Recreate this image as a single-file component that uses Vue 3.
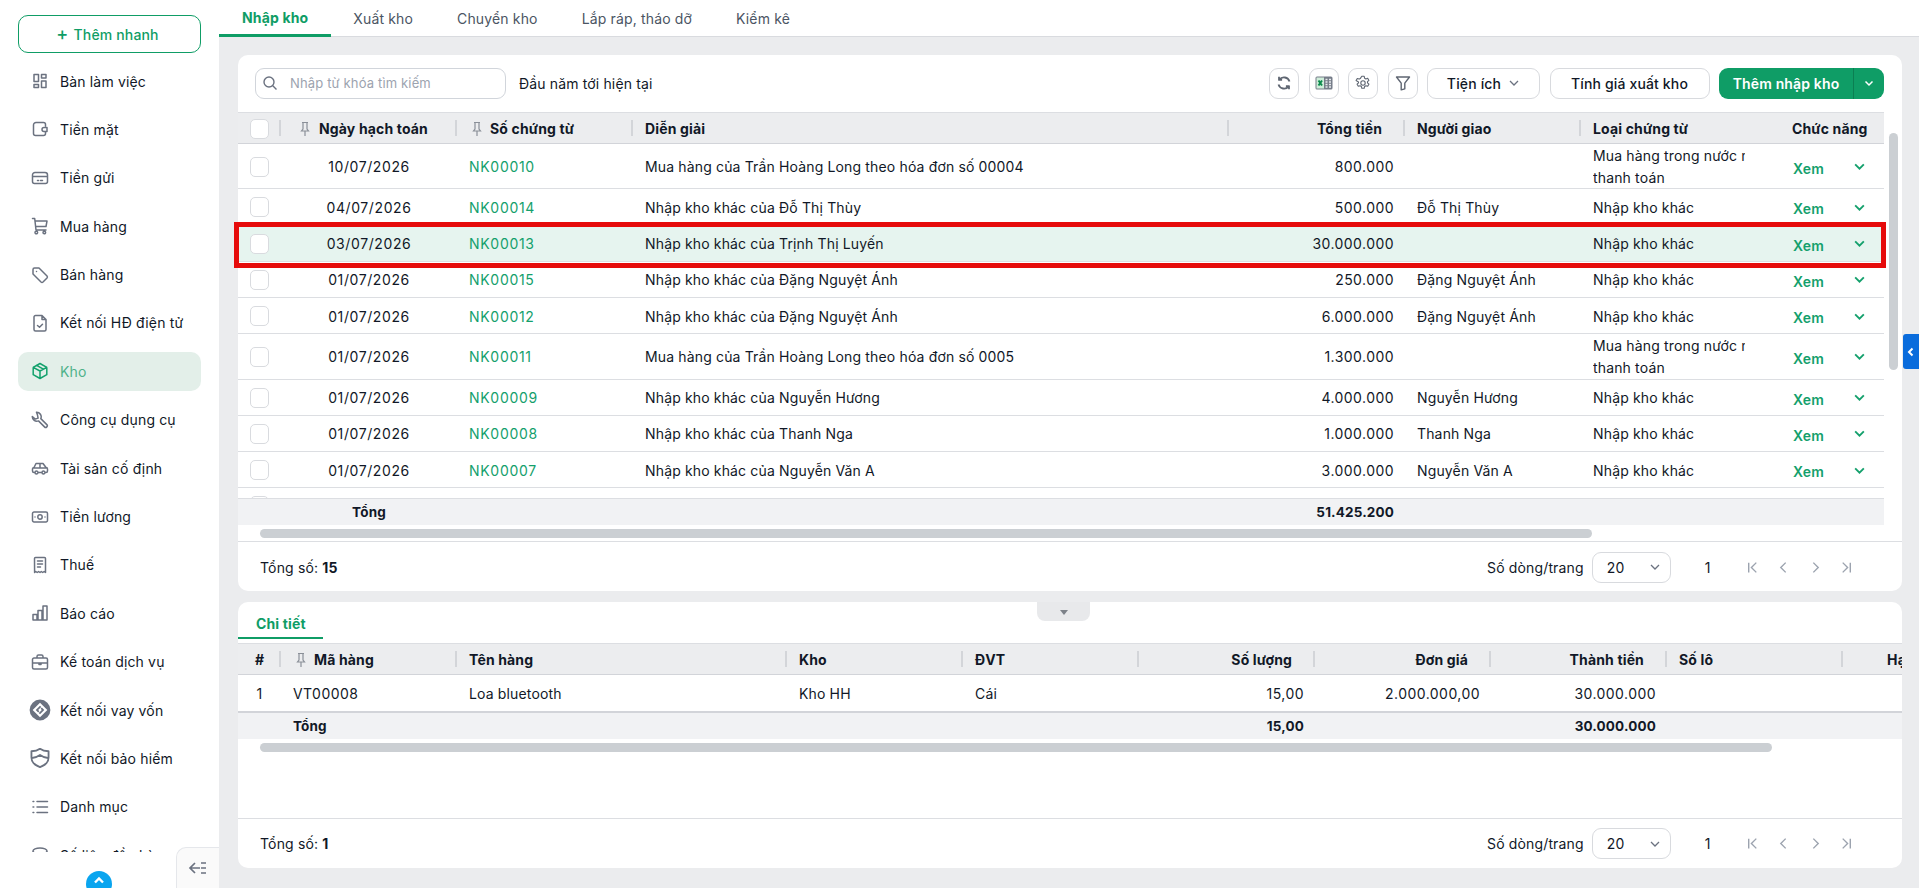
<template>
  <div class="page">

    <!-- SIDEBAR -->
    <aside class="sidebar">
      <button class="quick-add"><span class="plus">+</span>Thêm nhanh</button>
      <nav class="menu">
        <a
          v-for="item in menu"
          :key="item.label"
          class="menu-item"
          :class="{ active: item.active }"
        >
          <svg class="menu-icon" :class="item.kind" viewBox="0 0 18 18"><path :d="item.icon" /></svg>
          <span>{{ item.label }}</span>
        </a>
      </nav>
      <div class="scroll-up">
        <svg viewBox="0 0 14 14" width="14" height="14"><path d="M3 8.5 7 4.5l4 4" /></svg>
      </div>
      <div class="collapse">
        <svg viewBox="0 0 20 14" width="20" height="14"><path d="M7 2 2 7l5 5M2 7h10M13 2h5M13 7h5M13 12h5" /></svg>
      </div>
    </aside>

    <!-- MAIN -->
    <main class="main">
      <div class="tabs">
        <a
          v-for="(tab, i) in tabs"
          :key="tab"
          class="tab"
          :class="{ active: i === 0 }"
        >{{ tab }}</a>
      </div>

      <div class="cards">

        <!-- LIST CARD -->
        <section class="card list-card">
          <div class="toolbar">
            <div class="search">
              <svg viewBox="0 0 16 16" width="16" height="16"><path d="M7 2a5 5 0 1 0 0 10A5 5 0 0 0 7 2zM10.8 10.8 14.5 14.5" /></svg>
              <span>Nhập từ khóa tìm kiếm</span>
            </div>
            <span class="period">Đầu năm tới hiện tại</span>
            <div class="toolbar-right">
              <button class="icon-btn">
                <svg class="refresh" viewBox="0 0 16 16" width="16" height="16"><path d="M13.5 6.5A5.8 5.8 0 0 0 3.4 4.6M2.5 9.5a5.8 5.8 0 0 0 10.1 1.9M3 1.8v3.1h3.1M13 14.2v-3.1H9.9" /></svg>
              </button>
              <button class="icon-btn">
                <svg viewBox="0 0 18 16" width="18" height="16">
                  <rect class="xl-back" x="0.5" y="1.5" width="17" height="13" rx="1.5" />
                  <rect class="xl-front" x="1.5" y="2.5" width="7.5" height="11" />
                  <path class="xl-x" d="M3.5 5.5l3.5 5M7 5.5l-3.5 5" />
                  <path class="xl-grid" d="M10.5 4.5h2M14 4.5h2M10.5 7h2M14 7h2M10.5 9.5h2M14 9.5h2M10.5 12h2M14 12h2" />
                </svg>
              </button>
              <button class="icon-btn">
                <svg class="gear" viewBox="0 0 16 16" width="16" height="16"><path d="M6.8 1.3h2.4l.4 1.9 1.3.7 1.8-.6 1.2 2.1-1.4 1.3v1.2l1.4 1.300-1.2 2.100-1.800-.6-1.300.7-.4 1.900H6.800l-.4-1.900-1.300-.7-1.800.6-1.200-2.100 1.400-1.300V6.900L1.100 5.600l1.200-2.100 1.800.6 1.300-.7zM8 5.800a2.200 2.200 0 1 0 0 4.400 2.200 2.200 0 0 0 0-4.400z" /></svg>
              </button>
              <button class="icon-btn">
                <svg viewBox="0 0 16 16" width="16" height="16"><path d="M1.5 2h13L9.8 8.2v5.6l-3.6 1V8.2z" /></svg>
              </button>
              <button class="text-btn utility">
                Tiện ích
                <svg class="chev" viewBox="0 0 12 12" width="12" height="12"><path d="M2 4l4 4 4-4" /></svg>
              </button>
              <button class="text-btn price">Tính giá xuất kho</button>
              <div class="primary">
                <span class="primary-label">Thêm nhập kho</span>
                <span class="primary-arrow">
                  <svg viewBox="0 0 12 12" width="12" height="12"><path d="M2.5 4.5 6 8l3.5-3.5" /></svg>
                </span>
              </div>
            </div>
          </div>

          <div class="table-wrap">
            <div class="row-a head">
              <div class="cell center sep"><span class="check"></span></div>
              <div class="cell sep pinned-date">
                <svg class="pin" viewBox="0 0 12 16" width="12" height="16"><path d="M3 1.5h6M4 1.5V8L2.5 10h7L8 8V1.5M6 10v5" /></svg>
                Ngày hạch toán
              </div>
              <div class="cell sep pinned">
                <svg class="pin" viewBox="0 0 12 16" width="12" height="16"><path d="M3 1.5h6M4 1.5V8L2.5 10h7L8 8V1.5M6 10v5" /></svg>
                Số chứng từ
              </div>
              <div class="cell sep">Diễn giải</div>
              <div class="cell right sep head-money">Tổng tiền</div>
              <div class="cell sep">Người giao</div>
              <div class="cell">Loại chứng từ</div>
              <div class="cell actions-head">Chức năng</div>
            </div>

            <div class="rows">
              <div
                v-for="row in rows"
                :key="row.no"
                class="row-a body-row"
                :class="{ tall: row.tall, selected: row.selected }"
              >
                <div class="cell center"><span class="check"></span></div>
                <div class="cell center date">{{ row.date }}</div>
                <div class="cell link">{{ row.no }}</div>
                <div class="cell">{{ row.desc }}</div>
                <div class="cell right money">{{ row.total }}</div>
                <div class="cell">{{ row.person }}</div>
                <div v-if="row.tall" class="cell wrap">
                  <div class="clip">Mua hàng trong nước nhập kho</div>
                  <div class="clip">thanh toán</div>
                </div>
                <div v-else class="cell">{{ row.type }}</div>
                <div class="cell actions">
                  <span class="view">Xem</span>
                  <svg class="row-chev" viewBox="0 0 12 12" width="13" height="13"><path d="M2 4l4 4 4-4" /></svg>
                </div>
              </div>
              <div class="row-a body-row">
                <div class="cell center"><span class="check"></span></div>
              </div>
            </div>

            <div class="row-a foot">
              <div class="cell"></div>
              <div class="cell center">Tổng</div>
              <div class="cell"></div>
              <div class="cell"></div>
              <div class="cell right">51.425.200</div>
            </div>

            <!-- RED MARK -->
            <div class="mark"></div>
          </div>

          <div class="hscroll"><div class="thumb thumb-a"></div></div>

          <div class="pager">
            <span>Tổng số: <b>15</b></span>
            <div class="pager-right">
              <span>Số dòng/trang</span>
              <div class="size">20
                <svg viewBox="0 0 12 12" width="12" height="12"><path d="M2 4l4 4 4-4" /></svg>
              </div>
              <span class="page-no">1</span>
              <div class="page-icons">
                <svg v-for="d in pageIcons" :key="d" viewBox="0 0 12 12" width="13" height="13"><path :d="d" /></svg>
              </div>
            </div>
          </div>

          <div class="vscroll"></div>
        </section>

        <!-- DETAIL CARD -->
        <section class="card detail-card">
          <div class="splitter"><i></i></div>
          <div class="detail-tabs"><a class="detail-tab">Chi tiết</a></div>

          <div class="detail-table">
            <div class="row-b head">
              <div class="cell center sep">#</div>
              <div class="cell sep detail-code">
                <svg class="pin" viewBox="0 0 12 16" width="12" height="16"><path d="M3 1.5h6M4 1.5V8L2.5 10h7L8 8V1.5M6 10v5" /></svg>
                Mã hàng
              </div>
              <div class="cell sep">Tên hàng</div>
              <div class="cell sep">Kho</div>
              <div class="cell sep">ĐVT</div>
              <div class="cell right sep head-money">Số lượng</div>
              <div class="cell right sep head-money">Đơn giá</div>
              <div class="cell right sep head-money">Thành tiền</div>
              <div class="cell sep">Số lô</div>
              <div class="cell center">Hạn sử dụng</div>
            </div>
            <div class="row-b detail-row">
              <div class="cell center">1</div>
              <div class="cell detail-val money">VT00008</div>
              <div class="cell">Loa bluetooth</div>
              <div class="cell">Kho HH</div>
              <div class="cell">Cái</div>
              <div class="cell right money">15,00</div>
              <div class="cell right money">2.000.000,00</div>
              <div class="cell right money">30.000.000</div>
              <div class="cell"></div>
              <div class="cell"></div>
            </div>
            <div class="row-b foot detail-foot">
              <div class="cell"></div>
              <div class="cell detail-val">Tổng</div>
              <div class="cell"></div>
              <div class="cell"></div>
              <div class="cell"></div>
              <div class="cell right">15,00</div>
              <div class="cell"></div>
              <div class="cell right">30.000.000</div>
              <div class="cell"></div>
              <div class="cell"></div>
            </div>
          </div>

          <div class="hscroll detail-scroll"><div class="thumb thumb-b"></div></div>

          <div class="pager detail-pager">
            <span>Tổng số: <b>1</b></span>
            <div class="pager-right">
              <span>Số dòng/trang</span>
              <div class="size">20
                <svg viewBox="0 0 12 12" width="12" height="12"><path d="M2 4l4 4 4-4" /></svg>
              </div>
              <span class="page-no">1</span>
              <div class="page-icons">
                <svg v-for="d in pageIcons" :key="d" viewBox="0 0 12 12" width="13" height="13"><path :d="d" /></svg>
              </div>
            </div>
          </div>
        </section>

      </div>

      <!-- SIDE HANDLE -->
      <div class="handle">
        <svg viewBox="0 0 10 12" width="10" height="12"><path d="M6.5 2.5 3 6l3.5 3.5" /></svg>
      </div>
    </main>

  </div>
</template>

<script setup>
const tabs = ['Nhập kho', 'Xuất kho', 'Chuyển kho', 'Lắp ráp, tháo dỡ', 'Kiểm kê']

const menu = [
  { label: 'Bàn làm việc', icon: 'M3 2.5h4.5v7H3zM10.5 2.5H15V6h-4.5zM3 12.5h4.5v3H3zM10.5 9H15v6.5h-4.5z' },
  { label: 'Tiền mặt', icon: 'M14.5 6V4.5a2 2 0 0 0-2-2H5A2.5 2.5 0 0 0 2.5 5v8.5a2 2 0 0 0 2 2h8a2 2 0 0 0 2-2V12M16 7.5h-3a2 2 0 0 0 0 4h3z' },
  { label: 'Tiền gửi', icon: 'M4 3.5h10A2.5 2.5 0 0 1 16.5 6v6.5a2 2 0 0 1-2 2h-11a2 2 0 0 1-2-2V6A2.5 2.5 0 0 1 4 3.5zM1.5 7.5h15M6.5 11.5h1M9.5 11.5h2' },
  { label: 'Mua hàng', icon: 'M1.5 1.5h2.2L5 13h10M4 4h12l-1 5.5H4.7M4 15.5a1.3 1.3 0 1 0 2.6 0 1.3 1.3 0 1 0-2.6 0M12 15.5a1.3 1.3 0 1 0 2.6 0 1.3 1.3 0 1 0-2.6 0' },
  { label: 'Bán hàng', icon: 'M2 3.5A1.5 1.5 0 0 1 3.5 2H8l8 8a1.5 1.5 0 0 1 0 2l-4 4a1.5 1.5 0 0 1-2 0L2 8zM5.5 5.5h.01' },
  { label: 'Kết nối HĐ điện tử', icon: 'M4.5 1.5H11l4 4v10a1.5 1.5 0 0 1-1.5 1.5h-9A1.5 1.5 0 0 1 3 15.5V3a1.5 1.5 0 0 1 1.5-1.5zM11 1.5v4h4M6.5 11.5l2 1.7 3-3' },
  { label: 'Kho', active: true, icon: 'M9 1.5l6.8 3.8v7.4L9 16.5l-6.8-3.8V5.3zM2.2 5.3 9 9l6.8-3.7M9 9v7.5M5.6 3.4l6.8 3.8' },
  { label: 'Công cụ dụng cụ', icon: 'M5.5 1.3a4.5 4.5 0 0 1 4.3 6.3l6 6a1.6 1.6 0 0 1-2.3 2.3l-6-6a4.5 4.5 0 0 1-6.2-4.4l3 2.6 2.8-1-.6-3z' },
  { label: 'Tài sản cố định', icon: 'M4 13.5H3A1.5 1.5 0 0 1 1.5 12v-2A1.5 1.5 0 0 1 3 8.5l2-4h7l3 4a1.5 1.5 0 0 1 1.5 1.5v2a1.5 1.5 0 0 1-1.5 1.5h-1M7 13.5h4M1.8 9h14.4M4 13.5a1.5 1.5 0 1 0 3 0 1.5 1.5 0 1 0-3 0M11 13.5a1.5 1.5 0 1 0 3 0 1.5 1.5 0 1 0-3 0M9 4.5v4' },
  { label: 'Tiền lương', icon: 'M3 4h12a1.5 1.5 0 0 1 1.5 1.5v7A1.5 1.5 0 0 1 15 14H3a1.5 1.5 0 0 1-1.5-1.5v-7A1.5 1.5 0 0 1 3 4zM9 6.8a2.2 2.2 0 1 0 0 4.4 2.2 2.2 0 0 0 0-4.4zM4 9h.01M14 9h.01' },
  { label: 'Thuế', icon: 'M3.5 2.5a1 1 0 0 1 1-1h9a1 1 0 0 1 1 1v14l-1.4-1-1.4 1-1.4-1-1.3 1-1.4-1-1.4 1-1.4-1-1.2 1zM6.5 5h5M6.5 8h5M6.5 11h3' },
  { label: 'Báo cáo', icon: 'M2 10.5h4V16H2zM7 6.5h4V16H7zM12 2h4v14h-4z' },
  { label: 'Kế toán dịch vụ', icon: 'M3 5h12a1.5 1.5 0 0 1 1.5 1.5v8A1.5 1.5 0 0 1 15 16H3a1.5 1.5 0 0 1-1.5-1.5v-8A1.5 1.5 0 0 1 3 5zM6 5V3.5A1.5 1.5 0 0 1 7.5 2h3A1.5 1.5 0 0 1 12 3.5V5M1.5 10h15M8 10h2v1.5H8z' },
  { label: 'Kết nối vay vốn', kind: 'loan', icon: 'M9 .5a8.5 8.5 0 1 0 0 17 8.5 8.5 0 0 0 0-17zM9 3l6 6-6 6-6-6zM9 5.5 5.500 9l2 2 1-1-1-1L10 6.500zM9 12.500 12.500 9l-2-2-1 1 1 1L8 11.500z' },
  { label: 'Kết nối bảo hiểm', kind: 'wide', icon: 'M9 1.5c2 1.5 4.5 2 7 2v5c0 4-3 6.5-7 8-4-1.5-7-4-7-8v-5c2.5 0 5-.5 7-2zM2.5 9c2 0 4-.8 6.5-2.5C11.5 8.2 13.5 9 15.5 9' },
  { label: 'Danh mục', icon: 'M6 3.5h10.5M6 9h10.5M6 14.5h10.5M2 3.5h.8M2 9h.8M2 14.5h.8' },
  { label: 'Số liệu đầu kỳ', icon: 'M2 5c0-1.5 3-3 7-3s7 1.5 7 3-3 3-7 3-7-1.5-7-3zM2 5v9c0 1.5 3 3 7 3s7-1.5 7-3V5' }
]

const rows = [
  { date: '10/07/2026', no: 'NK00010', desc: 'Mua hàng của Trần Hoàng Long theo hóa đơn số 00004', total: '800.000', person: '', tall: true },
  { date: '04/07/2026', no: 'NK00014', desc: 'Nhập kho khác của Đỗ Thị Thùy', total: '500.000', person: 'Đỗ Thị Thùy', type: 'Nhập kho khác' },
  { date: '03/07/2026', no: 'NK00013', desc: 'Nhập kho khác của Trịnh Thị Luyến', total: '30.000.000', person: '', type: 'Nhập kho khác', selected: true },
  { date: '01/07/2026', no: 'NK00015', desc: 'Nhập kho khác của Đặng Nguyệt Ánh', total: '250.000', person: 'Đặng Nguyệt Ánh', type: 'Nhập kho khác' },
  { date: '01/07/2026', no: 'NK00012', desc: 'Nhập kho khác của Đặng Nguyệt Ánh', total: '6.000.000', person: 'Đặng Nguyệt Ánh', type: 'Nhập kho khác' },
  { date: '01/07/2026', no: 'NK00011', desc: 'Mua hàng của Trần Hoàng Long theo hóa đơn số 0005', total: '1.300.000', person: '', tall: true },
  { date: '01/07/2026', no: 'NK00009', desc: 'Nhập kho khác của Nguyễn Hương', total: '4.000.000', person: 'Nguyễn Hương', type: 'Nhập kho khác' },
  { date: '01/07/2026', no: 'NK00008', desc: 'Nhập kho khác của Thanh Nga', total: '1.000.000', person: 'Thanh Nga', type: 'Nhập kho khác' },
  { date: '01/07/2026', no: 'NK00007', desc: 'Nhập kho khác của Nguyễn Văn A', total: '3.000.000', person: 'Nguyễn Văn A', type: 'Nhập kho khác' }
]

const pageIcons = [
  'M2.5 1.5v9M9.5 1.5 5 6l4.5 4.5',
  'M8 1.5 3.5 6 8 10.5',
  'M4 1.5 8.5 6 4 10.5',
  'M9.5 1.5v9M2.5 1.5 7 6l-4.5 4.5'
]
</script>

<style>
html, body {
  margin: 0;
  height: 100%;
  overflow: hidden;
}
</style>

<style scoped>
.page {
  display: flex;
  height: 100vh;
  font-family: Inter, "Noto Sans", sans-serif;
  font-size: 14px;
  letter-spacing: 0.15px;
  color: #111827;
  background: #ebecee;
}

button {
  letter-spacing: inherit;
}

/* SIDEBAR */
.sidebar {
  position: relative;
  width: 219px;
  flex: none;
  padding: 15px 18px 0;
  box-sizing: border-box;
  background: #fff;
}

.quick-add {
  display: block;
  width: 183px;
  height: 38px;
  padding: 0 4px 0 0;
  border: 1px solid #0f9d66;
  border-radius: 10px;
  background: #fff;
  color: #0f9d66;
  font: 500 14px Inter, sans-serif;
}

.plus {
  font-size: 18px;
  line-height: 14px;
  margin-right: 5px;
}

.menu {
  height: 790px;
  margin-top: 8.5px;
  overflow: hidden;
}

.menu-item {
  display: flex;
  align-items: center;
  gap: 11px;
  height: 39px;
  margin-bottom: 9.4px;
  padding-left: 13px;
  border-radius: 10px;
}

.menu-icon {
  width: 18px;
  height: 18px;
  flex: none;
  fill: none;
  stroke: #6b7280;
  stroke-width: 1.5;
  stroke-linecap: round;
  stroke-linejoin: round;
}

.menu-icon.wide,
.menu-icon.loan {
  width: 22px;
  height: 22px;
  margin: 0 -2px;
}

.menu-icon.loan {
  fill: #6b7280;
  fill-rule: evenodd;
  stroke: none;
}

.menu-item.active {
  background: #e3efe9;
  color: #4fb28a;
}

.menu-item.active .menu-icon {
  stroke: #12a16c;
}

.scroll-up {
  position: absolute;
  left: 86px;
  top: 871px;
  width: 26px;
  height: 26px;
  border-radius: 50%;
  background: #0aa5ef;
  display: flex;
  justify-content: center;
  padding-top: 3px;
  box-sizing: border-box;
}

.scroll-up path {
  fill: none;
  stroke: #fff;
  stroke-width: 2.4;
}

.collapse {
  position: absolute;
  right: 0;
  bottom: 0;
  width: 43px;
  height: 41px;
  box-sizing: border-box;
  background: #fafafa;
  border: 1px solid #e5e7eb;
  border-width: 1px 0 0 1px;
  border-top-left-radius: 10px;
  display: flex;
  align-items: center;
  justify-content: center;
}

.collapse path {
  fill: none;
  stroke: #6b7280;
  stroke-width: 1.7;
}

/* MAIN */
.main {
  position: relative;
  flex: 1;
  min-width: 0;
}

.tabs {
  display: flex;
  height: 36px;
  background: #fff;
  border-bottom: 1px solid #d9dbdf;
}

.tab {
  display: flex;
  align-items: center;
  justify-content: center;
  height: 36px;
  box-sizing: border-box;
  padding: 0 22px;
  color: #4b5563;
}

.tab.active {
  padding: 0 23px;
  color: #0f9d66;
  font-weight: 700;
  border-bottom: 3px solid #0f9d66;
  height: 37px;
}

.cards {
  padding: 18px 17px 0 19px;
  display: flex;
  flex-direction: column;
  gap: 11px;
}

.card {
  position: relative;
  background: #fff;
  border-radius: 10px;
}

.list-card {
  height: 536px;
}

.detail-card {
  height: 266px;
}

/* TOOLBAR */
.toolbar {
  display: flex;
  align-items: center;
  height: 57px;
  box-sizing: border-box;
  padding: 0 18px 1px 17px;
}

.search {
  display: flex;
  align-items: center;
  gap: 12px;
  width: 251px;
  height: 31px;
  box-sizing: border-box;
  padding-left: 6px;
  border: 1px solid #d1d5db;
  border-radius: 9px;
  color: #9ca3af;
  font-size: 13px;
}

.search path {
  fill: none;
  stroke: #6b7280;
  stroke-width: 1.4;
}

.period {
  margin-left: 13px;
}

.toolbar-right {
  margin-left: auto;
  display: flex;
  align-items: center;
  gap: 9.5px;
}

.icon-btn {
  display: flex;
  align-items: center;
  justify-content: center;
  width: 30px;
  height: 31px;
  padding: 0;
  border: 1px solid #d8dade;
  border-radius: 9px;
  background: #fff;
}

.icon-btn path {
  fill: none;
  stroke: #5f6672;
  stroke-width: 1.4;
  stroke-linejoin: round;
}

.icon-btn .refresh path {
  stroke-width: 1.8;
}

.icon-btn .gear path {
  stroke-width: 1.1;
}

.icon-btn .xl-back {
  fill: #767d89;
}

.icon-btn .xl-front {
  fill: #cfeeda;
}

.icon-btn .xl-x {
  stroke: #0b8a4c;
  stroke-width: 2;
}

.icon-btn .xl-grid {
  stroke: #e8eaee;
  stroke-width: 1.4;
}

.text-btn {
  display: flex;
  align-items: center;
  justify-content: center;
  gap: 7px;
  height: 31px;
  padding: 0;
  border: 1px solid #d8dade;
  border-radius: 9px;
  background: #fff;
  color: #111827;
  font: 500 14px Inter, sans-serif;
}

.utility {
  width: 113px;
}

.price {
  width: 160px;
}

.chev path,
.size path {
  fill: none;
  stroke: #6b7280;
  stroke-width: 1.3;
}

.primary {
  display: flex;
  align-items: center;
  width: 165px;
  height: 31px;
  border-radius: 9px;
  background: #0f9d66;
  color: #fff;
  font-weight: 600;
}

.primary-label {
  width: 134px;
  text-align: center;
}

.primary-arrow {
  flex: 1;
  height: 100%;
  display: flex;
  align-items: center;
  justify-content: center;
  border-left: 1px solid #0b7f52;
}

.primary-arrow path {
  fill: none;
  stroke: #fff;
  stroke-width: 1.5;
}

/* TABLES */
.table-wrap {
  position: relative;
  margin-right: 18px;
}

.row-a {
  display: grid;
  grid-template-columns: 43px 176px 176px 596px 176px 176px 176px 127px;
  align-items: center;
}

.row-b {
  display: grid;
  grid-template-columns: 43px 176px 330px repeat(7, 176px);
  align-items: center;
}

.cell {
  position: relative;
  box-sizing: border-box;
  padding: 0 12px;
  white-space: nowrap;
  overflow: hidden;
}

.center {
  display: flex;
  align-items: center;
  justify-content: center;
  padding: 0;
  overflow: visible;
}

.right {
  text-align: right;
  padding-right: 11px;
}

.date {
  letter-spacing: 0.6px;
}

.link {
  color: #14a06c;
  letter-spacing: 0.7px;
}

.money {
  letter-spacing: 0.45px;
}

.head {
  height: 32px;
  box-sizing: border-box;
  background: #ecedef;
  border-top: 1px solid #dcdee2;
  border-bottom: 1px solid #d2d4d9;
  font-weight: 700;
  font-size: 14px;
}

.head .cell {
  height: 100%;
  display: flex;
  align-items: center;
  overflow: visible;
  padding-top: 1px;
}

.head .center {
  justify-content: center;
  gap: 9px;
}

.head .right {
  justify-content: flex-end;
}

.head .sep::after {
  content: "";
  position: absolute;
  right: 0;
  top: 7px;
  bottom: 7px;
  width: 2px;
  background: #d3d5d9;
}

.head .head-money {
  padding-right: 23px;
}

.head .pinned-date {
  padding-left: 18px;
  gap: 8px;
}

.head .pinned {
  padding-left: 14px;
  gap: 7px;
}

.head .actions-head {
  padding-left: 35px;
}

.pin {
  flex: none;
}

.pin path {
  fill: none;
  stroke: #8a8f98;
  stroke-width: 1.2;
}

.check {
  display: block;
  width: 19px;
  height: 20px;
  box-sizing: border-box;
  border: 1px solid #d9dbdf;
  border-radius: 5px;
  background: #fff;
}

.rows {
  height: 354px;
  overflow: hidden;
}

.body-row {
  height: 36.2px;
  padding-top: 1px;
  box-sizing: border-box;
  border-bottom: 1px solid #dcdee2;
}

.body-row.tall {
  height: 45.4px;
}

.body-row.selected {
  background: #e6f4ef;
}

.wrap {
  line-height: 22px;
}

.clip {
  overflow: hidden;
}

.actions {
  display: flex;
  align-items: center;
  justify-content: space-between;
  padding: 3px 18px 0 36px;
  overflow: visible;
}

.view {
  color: #14a06c;
  font-weight: 600;
}

.row-chev {
  margin-top: -3px;
}

.row-chev path {
  fill: none;
  stroke: #14a06c;
  stroke-width: 1.7;
}

.foot {
  height: 27px;
  background: #f1f2f4;
  border-top: 1px solid #dcdee2;
  box-sizing: border-box;
  font-weight: 700;
  font-size: 13.5px;
}

.mark {
  position: absolute;
  left: -4px;
  top: 110px;
  width: 1652px;
  height: 46px;
  box-sizing: border-box;
  border: 5px solid #e60b0b;
  pointer-events: none;
}

/* SCROLLBARS */
.hscroll {
  height: 17px;
  box-sizing: border-box;
  padding-top: 4px;
  border-bottom: 1px solid #dcdee2;
}

.thumb {
  height: 9px;
  margin-left: 22px;
  border-radius: 5px;
  background: #cbcfd3;
}

.thumb-a {
  width: 1332px;
}

.thumb-b {
  width: 1512px;
}

.vscroll {
  position: absolute;
  right: 4px;
  top: 78px;
  width: 9px;
  height: 237px;
  border-radius: 5px;
  background: #cbcfd3;
}

/* PAGER */
.pager {
  display: flex;
  align-items: center;
  justify-content: space-between;
  height: 49px;
  padding: 1px 0 0 22px;
  box-sizing: border-box;
}

.pager-right {
  display: flex;
  align-items: center;
  width: 415px;
}

.size {
  display: flex;
  align-items: center;
  justify-content: space-between;
  width: 79px;
  height: 31px;
  margin-left: 8px;
  padding: 0 9px 0 14px;
  box-sizing: border-box;
  border: 1px solid #d8dade;
  border-radius: 9px;
}

.page-no {
  margin-left: 34px;
}

.page-icons {
  display: flex;
  gap: 18.5px;
  margin-left: 35px;
}

.page-icons path {
  fill: none;
  stroke: #9ca3af;
  stroke-width: 1.3;
}

/* DETAIL */
.splitter {
  position: absolute;
  left: 799px;
  top: 0;
  width: 53px;
  height: 19px;
  background: #e8e9eb;
  border-radius: 0 0 8px 8px;
  display: flex;
  justify-content: center;
  padding-top: 8px;
  box-sizing: border-box;
}

.splitter i {
  width: 0;
  height: 0;
  border: 4px solid transparent;
  border-top: 5px solid #7d8289;
  border-bottom: 0;
}

.detail-tabs {
  height: 41px;
}

.detail-tab {
  display: inline-block;
  width: 85px;
  height: 37px;
  box-sizing: border-box;
  padding: 13px 0 0 18px;
  border-bottom: 2px solid #0f9d66;
  color: #0f9d66;
  font-weight: 700;
  font-size: 14px;
}

.detail-table {
  overflow: hidden;
}

.head .detail-code {
  padding-left: 14px;
  gap: 7px;
}

.detail-val {
  padding-left: 12px;
}

.detail-row {
  height: 36px;
}

.detail-foot {
  height: 28px;
  border-top: 2px solid #d2d4d9;
}

.detail-scroll {
  height: 80px;
}

.detail-pager {
  height: 48px;
}

/* SIDE HANDLE */
.handle {
  position: absolute;
  right: 0;
  top: 334px;
  width: 16px;
  height: 35px;
  background: #0a6cdc;
  border-radius: 3px 0 0 3px;
  display: flex;
  align-items: center;
  justify-content: center;
}

.handle path {
  fill: none;
  stroke: #fff;
  stroke-width: 2;
}
</style>
